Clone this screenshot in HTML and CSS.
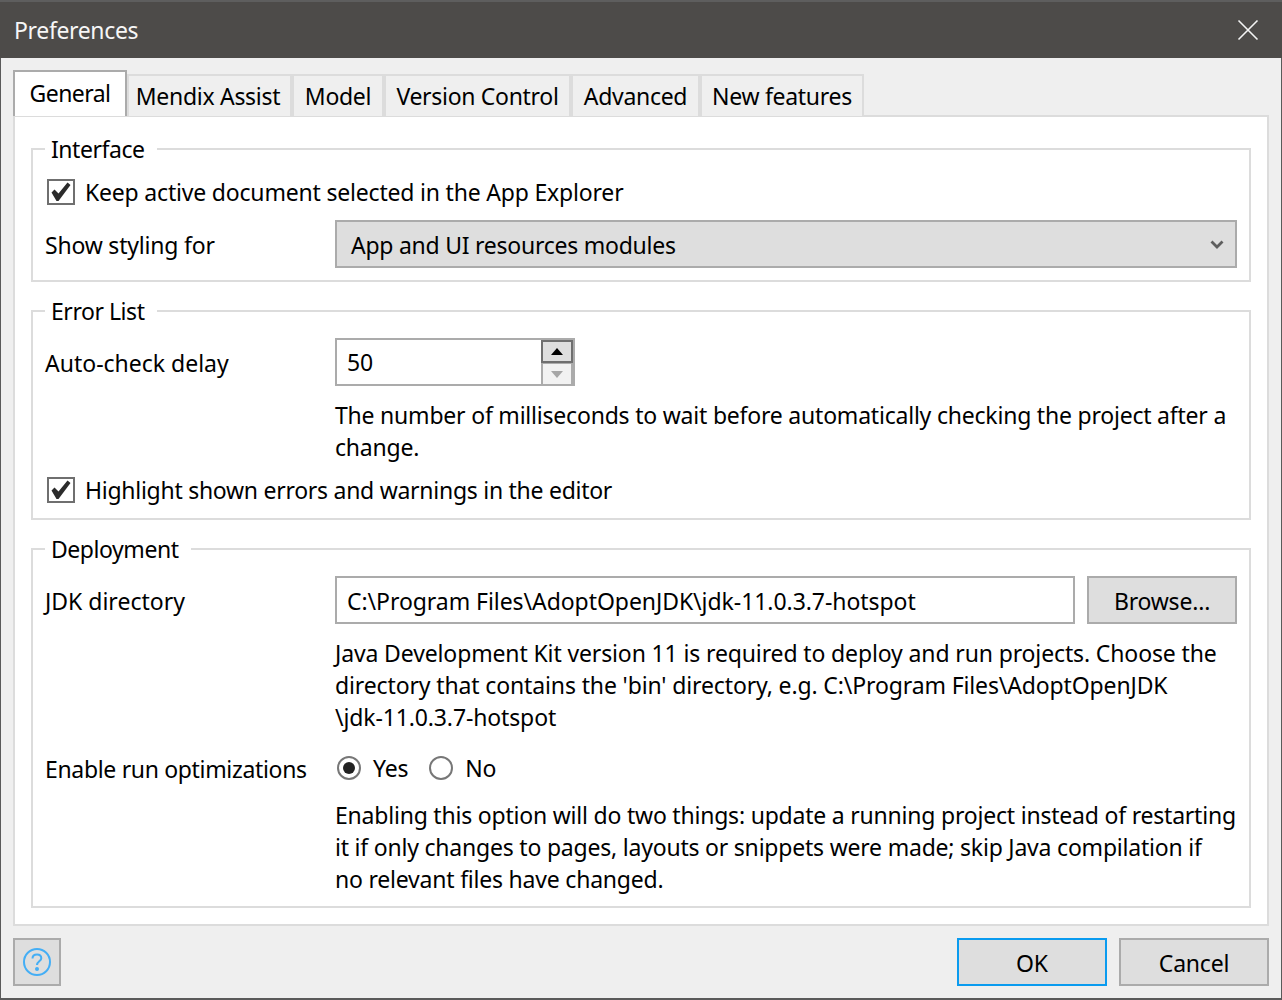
FILE: index.html
```html
<!DOCTYPE html>
<html lang="en">
<head>
<meta charset="utf-8">
<title>Preferences</title>
<link rel="stylesheet" href="styles.css">
</head>
<body>
<div class="window">
  <header class="titlebar">
    <span class="title">Preferences</span>
    <svg class="close" width="22" height="22" viewBox="0 0 22 22"><path d="M1.5 1.5L20.5 20.5M20.5 1.5L1.5 20.5" stroke="#f4f4f4" stroke-width="1.6" fill="none"/></svg>
  </header>
  <main class="content">
    <nav class="tabs">
      <div class="tab active">General</div>
      <div class="tab t-assist">Mendix Assist</div>
      <div class="tab t-model">Model</div>
      <div class="tab t-vc">Version Control</div>
      <div class="tab t-adv">Advanced</div>
      <div class="tab t-new">New features</div>
    </nav>
    <section class="panel">
      <fieldset class="group g-interface">
        <legend>Interface</legend>
        <label class="check c-keep"><span class="box"><svg width="24" height="22" viewBox="0 0 24 22"><path d="M2.5 11.5L5.5 8.5L9.5 12.5L18.5 1.5L21.5 4L9.5 20L7.5 20Z" fill="#2b2b2b"/></svg></span>Keep active document selected in the App Explorer</label>
        <div class="row r-combo">
          <span class="label">Show styling for</span>
          <div class="combo"><span>App and UI resources modules</span>
            <svg width="14" height="10" viewBox="0 0 14 10"><path d="M1.5 1.5L7 7L12.5 1.5" stroke="#5e5e5e" stroke-width="2.8" fill="none"/></svg>
          </div>
        </div>
      </fieldset>
      <fieldset class="group g-error">
        <legend>Error List</legend>
        <div class="row">
          <span class="label l-wide">Auto-check delay</span>
          <div class="spin">
            <span class="spin-value">50</span>
            <div class="spin-btns">
              <div class="spin-up"><i class="tri-up"></i></div>
              <div class="spin-down"><i class="tri-down"></i></div>
            </div>
          </div>
        </div>
        <p class="help h-error">The number of milliseconds to wait before automatically checking the project after a change.</p>
        <label class="check c-high"><span class="box"><svg width="24" height="22" viewBox="0 0 24 22"><path d="M2.5 11.5L5.5 8.5L9.5 12.5L18.5 1.5L21.5 4L9.5 20L7.5 20Z" fill="#2b2b2b"/></svg></span>Highlight shown errors and warnings in the editor</label>
      </fieldset>
      <fieldset class="group g-deploy">
        <legend>Deployment</legend>
        <div class="row">
          <span class="label l-wide">JDK directory</span>
          <div class="path-row">
            <div class="path">C:\Program Files\AdoptOpenJDK\jdk-11.0.3.7-hotspot</div>
            <div class="btn browse">Browse...</div>
          </div>
        </div>
        <p class="help h-jdk">Java Development Kit version 11 is required to deploy and run projects. Choose the directory that contains the 'bin' directory, e.g. C:\Program Files\AdoptOpenJDK<br>\jdk-11.0.3.7-hotspot</p>
        <div class="row r-radio">
          <span class="label l-tight">Enable run optimizations</span>
          <div class="radios">
            <span class="radio on"></span><span class="radio-text">Yes</span>
            <span class="radio"></span><span class="radio-text">No</span>
          </div>
        </div>
        <p class="help h-opt">Enabling this option will do two things: update a running project instead of restarting it if only changes to pages, layouts or snippets were made; skip Java compilation if<br>no relevant files have changed.</p>
      </fieldset>
    </section>
    <footer class="footer">
      <div class="btn help-btn"><svg width="30" height="30" viewBox="0 0 30 30"><circle cx="15" cy="15" r="13" stroke="#44aef5" stroke-width="2" fill="none"/><path d="M10.5 11.5C10.5 8.8 12.5 7.5 15 7.5C17.5 7.5 19.3 9 19.3 11.2C19.3 14.2 15 14.5 15 18" stroke="#44aef5" stroke-width="2" fill="none"/><circle cx="15" cy="22" r="2" fill="#44aef5"/></svg></div>
      <div class="btn ok">OK</div>
      <div class="btn cancel">Cancel</div>
    </footer>
  </main>
</div>
</body>
</html>
```

FILE: styles.css
```css
* { box-sizing: border-box; }
html, body { margin: 0; padding: 0; }
body {
  width: 1282px;
  height: 1000px;
  overflow: hidden;
  background: #efefef;
  font-family: "Noto Sans", "Open Sans", sans-serif;
  font-size: 23px;
  line-height: 32px;
  letter-spacing: -0.2px;
  color: #000;
}
.window {
  width: 1282px;
  height: 1000px;
  display: flex;
  flex-direction: column;
  border-left: 1px solid #5a5a5a;
  border-right: 1px solid #5a5a5a;
  border-bottom: 2px solid #5a5a5a;
}
.titlebar {
  height: 58px;
  flex: none;
  margin: 0 -1px;
  padding: 0 23px 0 14px;
  background: #4d4b49;
  border-top: 2px solid #5e5e5e;
  display: flex;
  align-items: center;
  justify-content: space-between;
  color: #f6f6f6;
  letter-spacing: -0.35px;
}
.content {
  flex: 1;
  padding: 12px 12px 0;
  display: flex;
  flex-direction: column;
}
.tabs {
  display: flex;
  height: 46px;
  align-items: flex-end;
  margin-bottom: -1px;
  position: relative;
  z-index: 1;
  letter-spacing: -0.3px;
}
.tab {
  height: 42px;
  border: 2px solid #dcdcdc;
  border-bottom: 0;
  background: #efefef;
  padding-top: 4px;
  text-align: center;
  white-space: nowrap;
}
.tab.active {
  width: 114px;
  height: 46px;
  background: #fff;
  border: 2px solid #ababab;
  border-bottom: 0;
  padding-top: 5px;
  letter-spacing: -0.55px;
}
.t-assist { width: 165px; padding-right: 3px; }
.t-model { width: 92px; }
.t-vc { width: 187px; }
.t-adv { width: 129px; }
.t-new { width: 164px; }
.panel {
  height: 811px;
  background: #fff;
  border: 2px solid #dcdcdc;
  padding: 18px 16px 0;
  display: flex;
  flex-direction: column;
}
.group {
  margin: 0;
  min-width: 0;
  border: 2px solid #dcdcdc;
  padding: 0 12px;
}
.group legend {
  padding: 1px 12px 0 6px;
  line-height: 31px;
  letter-spacing: -0.45px;
}
.g-interface { height: 149px; margin-top: -2px; padding-top: 11px; }
.g-error { height: 225px; margin-top: 13px; padding-top: 11px; }
.g-deploy { height: 375px; margin-top: 13px; padding-top: 11px; }
.check {
  display: flex;
  align-items: center;
  height: 32px;
  padding-left: 2px;
  letter-spacing: -0.27px;
}
.c-keep { letter-spacing: -0.19px; }
.box {
  width: 28px;
  height: 26px;
  border: 2px solid #6f6f6f;
  margin-right: 10px;
  display: flex;
  align-items: center;
  justify-content: center;
  background: #fff;
}
.row {
  display: grid;
  grid-template-columns: 290px 1fr;
  align-items: center;
}
.label { padding-top: 2px; }
.l-wide { letter-spacing: 0; }
.l-tight { letter-spacing: -0.33px; padding-top: 0; }
.r-combo { margin-top: 12px; }
.combo {
  height: 48px;
  background: #dedede;
  border: 2px solid #ababab;
  padding: 2px 11px 0 14px;
  display: flex;
  align-items: center;
  justify-content: space-between;
  letter-spacing: -0.25px;
}
.spin {
  width: 240px;
  height: 48px;
  border: 2px solid #ababab;
  display: flex;
  align-items: center;
  justify-content: space-between;
  padding-left: 10px;
}
.spin-btns {
  width: 32px;
  height: 44px;
  background: #ababab;
  display: flex;
  flex-direction: column;
  align-items: stretch;
}
.spin-up {
  height: 23px;
  background: #dedede;
  border: 2px solid #6f6f6f;
  display: flex;
  align-items: center;
  justify-content: center;
}
.spin-down {
  height: 20px;
  margin: 1px 2px 0;
  background: #f2f2f2;
  display: flex;
  align-items: center;
  justify-content: center;
}
.tri-up {
  border: 6px solid transparent;
  border-top: 0;
  border-bottom: 7px solid #000;
}
.tri-down {
  border: 6px solid transparent;
  border-bottom: 0;
  border-top: 7px solid #a6a6a6;
}
.help {
  margin: 0 0 0 290px;
}
.h-error { margin-top: 13px; letter-spacing: -0.21px; }
.c-high { margin-top: 11px; }
.h-jdk { margin-top: 13px; letter-spacing: -0.13px; }
.r-radio { margin-top: 19px; }
.h-opt { margin-top: 13px; letter-spacing: -0.21px; }
.path-row {
  display: flex;
  gap: 12px;
}
.path {
  flex: 1;
  height: 48px;
  border: 2px solid #ababab;
  padding: 7px 10px;
  white-space: nowrap;
  letter-spacing: -0.06px;
}
.btn {
  background: #dedede;
  border: 2px solid #ababab;
  height: 48px;
  padding-top: 2px;
  display: flex;
  align-items: center;
  justify-content: center;
}
.browse { width: 150px; }
.radios {
  display: flex;
  align-items: center;
  padding-bottom: 2px;
}
.radio {
  width: 24px;
  height: 24px;
  border: 2px solid #777;
  border-radius: 50%;
  background: #fff;
  position: relative;
  margin-left: 2px;
}
.radio.on::after {
  content: "";
  position: absolute;
  left: 4px;
  top: 4px;
  width: 12px;
  height: 12px;
  border-radius: 50%;
  background: #222;
}
.radio-text { margin: 0 19px 0 12px; }
.footer {
  display: flex;
  align-items: center;
  margin-top: 12px;
  gap: 12px;
}
.help-btn { width: 48px; margin-right: auto; padding-top: 0; }
.ok { width: 150px; border-color: #0a9bef; }
.cancel { width: 150px; }
```
